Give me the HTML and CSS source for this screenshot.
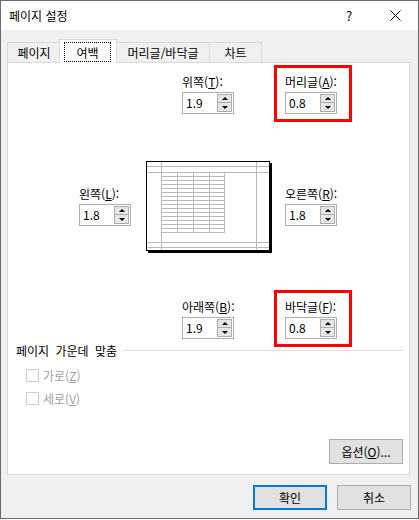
FILE: index.html
```html
<!DOCTYPE html>
<html lang="ko">
<head>
<meta charset="utf-8">
<title>페이지 설정</title>
<link rel="stylesheet" href="styles.css">
</head>
<body>
<div class="win">
  <div class="titlebar">
    <span class="title">페이지 설정</span>
    <span class="tbtn help">?</span>
    <span class="tbtn close">
      <svg width="11" height="11" viewBox="0 0 11 11"><path d="M0.5 0.5 L10.5 10.5 M10.5 0.5 L0.5 10.5" stroke="#000" stroke-width="1" fill="none"/></svg>
    </span>
  </div>
  <div class="tabs">
    <div class="tab first">페이지</div>
    <div class="tab active"><span class="focus">여백</span></div>
    <div class="tab wide">머리글/바닥글</div>
    <div class="tab last">차트</div>
  </div>
  <div class="panel">
    <div class="row r1">
      <div class="field">
        <div class="lbl">위쪽(<u>T</u>):</div>
        <div class="spinbox"><span class="val">1.9</span><span class="spin"><span class="sb up"></span><span class="sb down"></span></span></div>
      </div>
      <div class="field hl">
        <div class="lbl">머리글(<u>A</u>):</div>
        <div class="spinbox"><span class="val">0.8</span><span class="spin"><span class="sb up"></span><span class="sb down"></span></span></div>
      </div>
    </div>
    <div class="row r2">
      <div class="field mid">
        <div class="lbl">왼쪽(<u>L</u>):</div>
        <div class="spinbox"><span class="val">1.8</span><span class="spin"><span class="sb up"></span><span class="sb down"></span></span></div>
      </div>
      <svg class="preview" width="126" height="92" viewBox="0 0 126 92" shape-rendering="crispEdges">
        <rect x="2" y="2" width="124" height="90" fill="#000"/>
        <rect x="0.5" y="0.5" width="123" height="89" fill="#fff" stroke="#000"/>
        <path stroke="#b9b9b9" fill="none" d="M15.5 1 V89 M110.5 1 V89 M1 5.5 H123 M1 11.5 H123 M1 81.5 H123 M1 86.5 H123
          M31.5 11 V72 M47.5 11 V72 M63.5 11 V72 M78.5 11 V72
          M15 15.5 H79 M15 19.5 H79 M15 23.5 H79 M15 27.5 H79 M15 31.5 H79 M15 35.5 H79 M15 39.5 H79 M15 43.5 H79
          M15 47.5 H79 M15 51.5 H79 M15 55.5 H79 M15 59.5 H79 M15 63.5 H79 M15 67.5 H79 M15 71.5 H79"/>
      </svg>
      <div class="field mid right">
        <div class="lbl">오른쪽(<u>R</u>):</div>
        <div class="spinbox"><span class="val">1.8</span><span class="spin"><span class="sb up"></span><span class="sb down"></span></span></div>
      </div>
    </div>
    <div class="row r3">
      <div class="field">
        <div class="lbl">아래쪽(<u>B</u>):</div>
        <div class="spinbox"><span class="val">1.9</span><span class="spin"><span class="sb up"></span><span class="sb down"></span></span></div>
      </div>
      <div class="field hl">
        <div class="lbl">바닥글(<u>F</u>):</div>
        <div class="spinbox"><span class="val">0.8</span><span class="spin"><span class="sb up"></span><span class="sb down"></span></span></div>
      </div>
    </div>
    <div class="group-head"><span class="gh-text">페이지 가운데 맞춤</span><span class="rule"></span></div>
    <div class="check first-check"><span class="box"></span>가로(<u>Z</u>)</div>
    <div class="check"><span class="box"></span>세로(<u>V</u>)</div>
    <div class="opt-row"><button class="btn opt">옵션(<u>O</u>)...</button></div>
  </div>
  <div class="actions">
    <button class="btn default">확인</button>
    <button class="btn">취소</button>
  </div>
</div>
</body>
</html>
```
FILE: styles.css
```css
html, body {
  margin: 0;
  background: #ffffff;
}
body {
  font-family: "Noto Sans CJK KR", "Noto Sans", sans-serif;
  font-size: 12px;
  color: #000;
}
.win {
  width: 417px;
  height: 517px;
  border: 1px solid #6b6b6b;
  background: #f0f0f0;
  display: flex;
  flex-direction: column;
}
.titlebar {
  height: 29px;
  background: #fff;
  display: flex;
  align-items: center;
}
.title {
  margin-left: 8px;
  line-height: 15px;
  margin-right: auto;
}
.tbtn {
  width: 46px;
  height: 29px;
  display: flex;
  align-items: center;
  justify-content: center;
}
.help {
  font-size: 13px;
}
.close svg {
  display: block;
}
.tabs {
  display: flex;
  align-items: flex-end;
  height: 24px;
  margin: 9px 0 -1px 6px;
  position: relative;
  z-index: 1;
}
.tab {
  box-sizing: border-box;
  height: 20px;
  margin-bottom: 1px;
  margin-left: -1px;
  border: 1px solid #d9d9d9;
  border-bottom: none;
  background: #f0f0f0;
  display: flex;
  align-items: center;
  justify-content: center;
  line-height: 15px;
}
.tab.first {
  margin-left: 0;
  width: 54px;
}
.tab.active {
  width: 58px;
  height: 24px;
  margin-bottom: 0;
  margin-left: -2px;
  background: #fff;
  align-items: flex-start;
  justify-content: flex-start;
  position: relative;
  z-index: 2;
}
.tab.wide {
  width: 94px;
}
.tab.last {
  width: 53px;
}
.focus {
  display: flex;
  align-items: center;
  justify-content: center;
  box-sizing: border-box;
  width: 47px;
  height: 20px;
  margin: 2px 0 0 4px;
  border: 1px dotted #000;
}
.panel {
  box-sizing: border-box;
  width: 403px;
  height: 413px;
  margin-left: 6px;
  border: 1px solid #d9d9d9;
  background: #fff;
  display: flex;
  flex-direction: column;
}
.row {
  display: flex;
  align-items: flex-start;
}
.r1 {
  margin-top: 2px;
  padding-left: 163px;
  gap: 25px;
}
.r2 {
  margin-top: 39px;
  padding-left: 60px;
}
.r3 {
  margin-top: 37px;
  padding-left: 163px;
  gap: 25px;
}
.field {
  box-sizing: border-box;
  width: 78px;
  height: 57px;
  border: 3px solid transparent;
  padding: 6px 0 0 8px;
}
.field.hl {
  border-color: #ff0000;
}
.field.mid {
  margin-top: 16px;
}
.field.right {
  margin-left: 2px;
}
.preview {
  display: block;
}
.lbl {
  line-height: 15px;
  height: 15px;
  white-space: nowrap;
}
.spinbox {
  box-sizing: border-box;
  width: 52px;
  height: 22px;
  margin-top: 3px;
  border: 1px solid #adadad;
  background: #fff;
  display: flex;
}
.val {
  flex: 1;
  padding-left: 3px;
  line-height: 20px;
}
.spin {
  box-sizing: border-box;
  width: 15px;
  height: 18px;
  margin: 1px 1px 0 0;
  border: 1px solid #adadad;
  display: flex;
  flex-direction: column;
}
.sb {
  height: 8px;
  background: #e6e6e6;
  display: flex;
  align-items: center;
  justify-content: center;
}
.sb.up {
  box-sizing: border-box;
  border-bottom: 1px solid #adadad;
}
.sb.up::after {
  content: "";
  border-left: 3px solid transparent;
  border-right: 3px solid transparent;
  border-bottom: 3px solid #000;
}
.sb.down::after {
  content: "";
  border-left: 3px solid transparent;
  border-right: 3px solid transparent;
  border-top: 3px solid #000;
}
.group-head {
  margin-top: -4px;
  padding: 0 5px 0 8px;
  display: flex;
  align-items: center;
  line-height: 15px;
}
.gh-text {
  word-spacing: 3px;
}
.rule {
  flex: 1;
  height: 1px;
  margin-left: 6px;
  background: #dcdcdc;
}
.check {
  display: flex;
  align-items: center;
  line-height: 15px;
  height: 15px;
  margin-top: 8px;
  padding-left: 18px;
  color: #a0a0a0;
}
.check.first-check {
  margin-top: 10px;
}
.box {
  box-sizing: border-box;
  width: 13px;
  height: 13px;
  margin-right: 4px;
  border: 1px solid #cccccc;
  background: #fff;
}
.opt-row {
  margin-top: auto;
  padding: 0 6px 10px 0;
  display: flex;
  justify-content: flex-end;
}
.btn {
  font: inherit;
  color: #000;
  box-sizing: border-box;
  width: 74px;
  height: 25px;
  padding: 0;
  border: 1px solid #adadad;
  background: #e1e1e1;
  line-height: 15px;
}
.btn.default {
  border: 2px solid #0078d7;
}
.actions {
  margin-top: 10px;
  padding-right: 7px;
  display: flex;
  justify-content: flex-end;
  gap: 10px;
}
```
